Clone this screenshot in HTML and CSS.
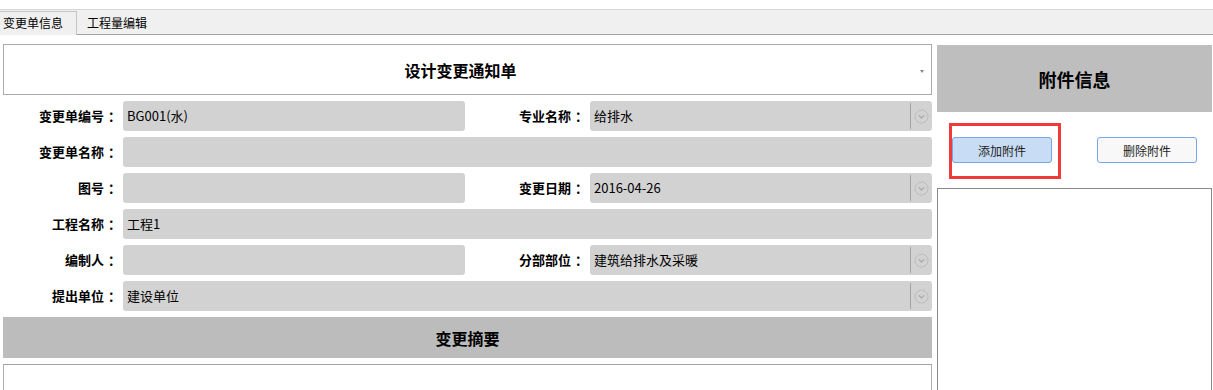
FILE: index.html
```html
<!DOCTYPE html>
<html lang="zh-CN">
<head>
  <meta charset="UTF-8" />
  <title>变更单信息</title>
  <link rel="stylesheet" href="styles.css">
</head>
<body>
  <div class="tabbar">
    <div class="tab active">变更单信息</div>
    <div class="tab">工程量编辑</div>
  </div>

  <div class="main">
    <div class="left">
      <div class="title-box">
        <span>设计变更通知单</span>
        <i class="caret"></i>
      </div>

      <div class="form">
        <label>变更单编号<span class="colon">：</span></label>
        <div class="field">BG001(水)</div>
        <label>专业名称<span class="colon">：</span></label>
        <div class="field combo">给排水<span class="drop"><svg width="15" height="15" viewBox="0 0 15 15"><circle cx="7.5" cy="7.5" r="6.5" fill="none" stroke="#bdbdbd"/><path d="M4.8 6.3 L7.5 9 L10.2 6.3" fill="none" stroke="#a8a8a8" stroke-width="1.2"/></svg></span></div>

        <label>变更单名称<span class="colon">：</span></label>
        <div class="field wide"></div>

        <label>图号<span class="colon">：</span></label>
        <div class="field"></div>
        <label>变更日期<span class="colon">：</span></label>
        <div class="field combo">2016-04-26<span class="drop"><svg width="15" height="15" viewBox="0 0 15 15"><circle cx="7.5" cy="7.5" r="6.5" fill="none" stroke="#bdbdbd"/><path d="M4.8 6.3 L7.5 9 L10.2 6.3" fill="none" stroke="#a8a8a8" stroke-width="1.2"/></svg></span></div>

        <label>工程名称<span class="colon">：</span></label>
        <div class="field wide">工程1</div>

        <label>编制人<span class="colon">：</span></label>
        <div class="field"></div>
        <label>分部部位<span class="colon">：</span></label>
        <div class="field combo">建筑给排水及采暖<span class="drop"><svg width="15" height="15" viewBox="0 0 15 15"><circle cx="7.5" cy="7.5" r="6.5" fill="none" stroke="#bdbdbd"/><path d="M4.8 6.3 L7.5 9 L10.2 6.3" fill="none" stroke="#a8a8a8" stroke-width="1.2"/></svg></span></div>

        <label>提出单位<span class="colon">：</span></label>
        <div class="field wide combo">建设单位<span class="drop"><svg width="15" height="15" viewBox="0 0 15 15"><circle cx="7.5" cy="7.5" r="6.5" fill="none" stroke="#bdbdbd"/><path d="M4.8 6.3 L7.5 9 L10.2 6.3" fill="none" stroke="#a8a8a8" stroke-width="1.2"/></svg></span></div>
      </div>

      <div class="section-bar">变更摘要</div>
      <div class="summary-box"></div>
    </div>

    <div class="right">
      <div class="right-head">附件信息</div>
      <div class="btn-row">
        <div class="highlight">
          <button class="btn primary">添加附件</button>
        </div>
        <button class="btn">删除附件</button>
      </div>
      <div class="file-list"></div>
    </div>
  </div>
</body>
</html>
```

FILE: styles.css
```css
html, body {
  margin: 0;
  height: 100%;
  overflow: hidden;
  background: #fff;
  font-family: "Noto Sans CJK SC", "Noto Sans", sans-serif;
  color: #000;
}
.tabbar {
  margin-top: 9px;
  height: 24px;
  background: #f0f0f0;
  border-top: 1px solid #d6d6d6;
  border-bottom: 1px solid #a0a0a8;
  display: flex;
  align-items: flex-end;
  font-size: 12px;
}
.tab {
  padding: 0 14px 0 3px;
  height: 22px;
  line-height: 21px;
}
.tab.active {
  width: 60px;
  padding: 0 13px 0 3px;
  height: 23px;
  margin-bottom: -1px;
  background: #f0f0f0;
  border-top: 1px solid #c4c4c4;
  border-right: 1px solid #c4c4c4;
}
.tab + .tab {
  padding-left: 10px;
}
.main {
  display: flex;
  gap: 5px;
  padding: 9px 1px 0 3px;
}
.left {
  width: 929px;
  display: flex;
  flex-direction: column;
  gap: 6px;
}
.title-box {
  height: 49px;
  border: 1px solid #aaa;
  display: flex;
  align-items: center;
  justify-content: center;
  padding-right: 14px;
  font-size: 16px;
  font-weight: bold;
  position: relative;
}
.caret {
  position: absolute;
  right: 7px;
  top: 25px;
  border-left: 2.5px solid transparent;
  border-right: 2.5px solid transparent;
  border-top: 3px solid #888;
}
.form {
  display: grid;
  grid-template-columns: 120px 342px 125px 342px;
  grid-auto-rows: 30px;
  row-gap: 6px;
}
.form label {
  font-size: 13px;
  font-weight: bold;
  text-align: right;
  padding-right: 2px;
  line-height: 30px;
}
.colon {
  display: inline-block;
  padding-left: 4px;
}
.field {
  background: #d2d2d2;
  border-radius: 3px;
  font-size: 13px;
  line-height: 30px;
  padding-left: 4px;
  display: flex;
  align-items: center;
}
.field.wide {
  grid-column: 2 / 5;
}
.combo {
  justify-content: space-between;
}
.drop {
  height: 26px;
  width: 20px;
  border-left: 1px solid #a4a4a4;
  display: flex;
  align-items: center;
  justify-content: center;
  padding-right: 1px;
}
.drop svg {
  display: block;
}
.section-bar {
  height: 41px;
  background: #bcbcbc;
  font-size: 16px;
  font-weight: bold;
  display: flex;
  align-items: center;
  justify-content: center;
}
.summary-box {
  height: 60px;
  border: 1px solid #b0b0b8;
  border-top-color: #a0a0a8;
}
.right {
  width: 275px;
  display: flex;
  flex-direction: column;
}
.right-head {
  margin-top: 1px;
  height: 67px;
  background: #bebebe;
  font-size: 18px;
  font-weight: bold;
  display: flex;
  align-items: center;
  justify-content: center;
}
.btn-row {
  display: flex;
  justify-content: space-between;
  align-items: flex-start;
  padding: 11px 15px 0 12px;
}
.highlight {
  border: 3px solid #f03a3a;
  padding: 11px 6px 13px 0;
}
.btn {
  width: 100px;
  height: 26px;
  border: 1px solid #78a6e6;
  border-radius: 3px;
  background: #f8f8f8;
  font-family: inherit;
  font-size: 12px;
  color: #222;
  padding: 0;
  display: block;
}
.btn-row > .btn {
  margin-top: 14px;
}
.btn.primary {
  background: #c8ddf5;
}
.file-list {
  margin-top: 9px;
  height: 240px;
  border: 1px solid #8a8a8a;
}
```
